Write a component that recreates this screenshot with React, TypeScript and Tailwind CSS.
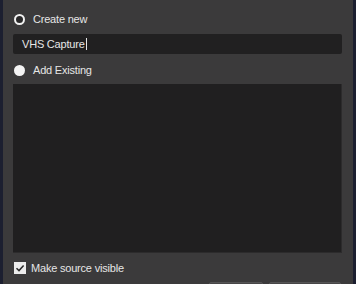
export default function App() {
    return (
        <div
            className="w-[356px] h-[284px] overflow-hidden flex bg-[#3b3a3b] text-[#e6e6e6] text-[11px] tracking-[-0.2px]"
            style={{ fontFamily: '"Liberation Sans", Arial, sans-serif' }}
        >
            <div className="w-[3px] shrink-0 bg-[#1c1f30]" />
            <div className="flex-1 flex flex-col pl-[10px] pr-[11px] pt-[11px] [&>*]:shrink-0">
                {/* Create new */}
                <label className="h-4 flex items-center gap-[8px]">
                    <span className="w-[11px] h-[11px] ml-px rounded-full border-2 border-[#f2f2f2] bg-[#2a292a]" />
                    <span>Create new</span>
                </label>

                <div className="mt-[7px] h-5 rounded-[2px] bg-[#212021] flex items-center pl-[9px]">
                    <span>VHS Capture</span>
                    <span className="w-px h-[12px] bg-[#e6e6e6] ml-px" />
                </div>

                {/* Add existing */}
                <label className="mt-2 h-4 flex items-center gap-[8px]">
                    <span className="w-[11px] h-[11px] ml-px rounded-full bg-[#f4f4f4]" />
                    <span>Add Existing</span>
                </label>

                <div className="mt-[6px] h-[169px] bg-[#201f20] border-b border-r border-[#2c2b2c]" />

                <label className="mt-[7px] h-4 flex items-center gap-[5px]">
                    <span className="w-3 h-3 ml-px bg-[#ececec] flex items-center justify-center">
                        <svg width="10" height="10" viewBox="0 0 10 10" fill="none">
                            <path d="M1.5 5.2 L4 7.6 L8.6 2.4" stroke="#2a2a2a" strokeWidth="1.5" />
                        </svg>
                    </span>
                    <span>Make source visible</span>
                </label>

                <div className="mt-[6px] flex justify-end gap-[6px] pr-px">
                    <button className="w-[54px] h-6 rounded-[2px] bg-[#474647] border border-[#555455]" />
                    <button className="w-[72px] h-6 rounded-[2px] bg-[#474647] border border-[#555455]" />
                </div>
            </div>
            <div className="w-[3px] shrink-0 bg-[#1c1f30]" />
        </div>
    );
}
